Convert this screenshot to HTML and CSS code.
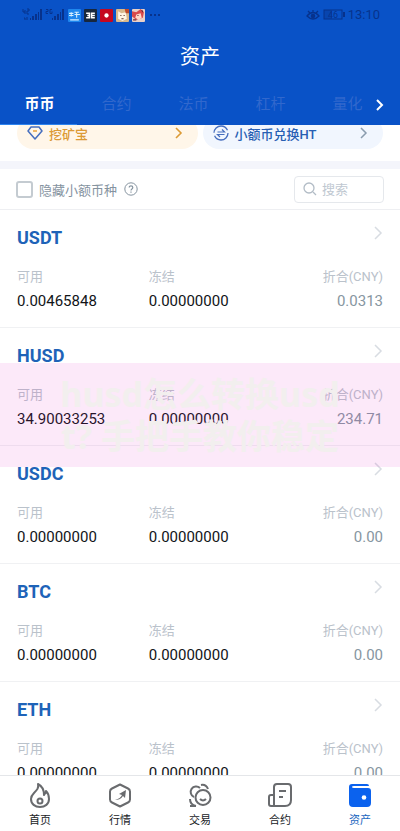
FILE: index.html
```html
<!DOCTYPE html>
<html lang="zh-CN">
<head>
<meta charset="utf-8">
<meta name="viewport" content="width=device-width, initial-scale=1">
<title>资产</title>
<link rel="stylesheet" href="styles.css">
</head>
<body>
<header class="top">
  <div class="status">
    <svg class="signal" width="20" height="14" viewBox="0 0 20 14"><path d="M1 1v3h2M3 2v4M5 1h2v2H5v3h2M2 10h1v2M5 9v3" stroke="currentColor" fill="none"/><path d="M8 10h1v2H8zM10 8h2v4h-2zM13 6h2v6h-2zM16 4h1v8h-1zM18 1h2v11h-2z" fill="currentColor"/></svg>
    <svg class="signal" width="20" height="14" viewBox="0 0 20 14"><path d="M1 1.500h2v2H1v2h2M7 1.500H5v4h2v-2" stroke="currentColor" fill="none"/><path d="M7 10h1v2H7zM9 8h2v4H9zM12 6h2v6h-2zM15 4h1v8h-1zM17 1h2v11h-2z" fill="currentColor"/></svg>
    <svg class="app" viewBox="0 0 12 12"><rect width="12" height="12" rx="1" fill="#1e87ee"/><path d="M1 4h4M3 3v4M1 6h4M6 3h4M8 3v5M6 5h5M2 10h8" stroke="#d5efff" fill="none"/></svg>
    <svg class="app" viewBox="0 0 12 12"><rect width="12" height="12" rx="1" fill="#17273d"/><path d="M2 4h3v4H2M3 6h2M10 4H7v4h3M7 6h3" stroke="#fff" stroke-width="1.400" fill="none"/></svg>
    <svg class="app" viewBox="0 0 12 12"><rect width="12" height="12" rx="1" fill="#c50720"/><circle cx="6" cy="6" r="2" fill="#fff"/></svg>
    <svg class="app" viewBox="0 0 12 12"><rect width="12" height="12" rx="1" fill="#d9b98c"/><path d="M2 2l3 2 4-1 1 6-4 2-4-2z" fill="#fff4e4"/><path d="M8 0h4v4H9z" fill="#c34a2b"/><path d="M4 6h1M7 6h1M5 9h2" stroke="#5d3a2c"/></svg>
    <svg class="app" viewBox="0 0 12 12"><rect width="12" height="12" rx="1" fill="#ead1c8"/><path d="M0 2l4 1 4-3 3 3-1 5-6 2-4-3z" fill="#d94a4c"/><path d="M4 5l4-1 1 4-3 2-3-2z" fill="#ffd9ca"/><path d="M9 1l1 2M5 6h1M1 10h3" stroke="#702831"/></svg>
    <svg class="more" width="12" height="4" viewBox="0 0 12 4"><path d="M2 1h2v2H2zM6 1h2v2H6zM10 1h2v2h-2z" fill="currentColor"/></svg>
    <svg class="eye" width="14" height="12" viewBox="0 0 14 12"><path d="M1 7q6-7 12 0-6 6-12 0zM2 2l2 2M7 1v2M12 2l-2 2" stroke="currentColor" stroke-width="1.300" fill="none"/><circle cx="7" cy="7" r="2.300" fill="currentColor"/></svg>
    <svg width="22" height="12" viewBox="0 0 22 12"><rect x="1" y="1" width="18" height="9" stroke="currentColor" fill="none"/><path d="M1 1h8v9H1z" fill="currentColor" opacity=".4"/><path d="M20 3h2v5h-2z" fill="currentColor"/><text x="5" y="9" class="charge">46</text></svg>
    <time>13:10</time>
  </div>
  <h1>资产</h1>
  <div class="tabbar">
    <nav class="tabs">
      <a href="#spot" class="tab on">币币</a><a href="#contract" class="tab">合约</a><a href="#fiat" class="tab">法币</a><a href="#margin" class="tab">杠杆</a><a href="#quant" class="tab">量化</a>
    </nav>
    <button class="next" aria-label="更多"><svg width="10" height="14" viewBox="0 0 10 14"><path d="M2 2l5 5-5 5" stroke="#fff" stroke-width="2" fill="none"/></svg></button>
  </div>
</header>

<main class="content">
  <div class="chips">
    <a href="#mining" class="chip gold"><svg width="16" height="16" viewBox="0 0 16 16"><path d="M4 2h8l3 4-7 8-7-8z" stroke="#466ebe" stroke-width="1.500" stroke-linejoin="round" fill="none"/><path d="M6 6h4" stroke="#e9a03a" stroke-width="1.500"/></svg><span>挖矿宝</span><svg class="go" width="10" height="14" viewBox="0 0 10 14"><path d="M2 2l5 5-5 5" stroke="currentColor" stroke-width="1.600" fill="none"/></svg></a>
    <a href="#swap" class="chip blue"><svg width="16" height="16" viewBox="0 0 16 16"><circle cx="8" cy="8" r="7" stroke="#466ebe" stroke-width="1.300" fill="none" stroke-dasharray="19 3"/><path d="M4.500 7h7L9 4.500M11.500 9.500h-7L7 12" stroke="#466ebe" stroke-width="1.200" fill="none"/></svg><span>小额币兑换HT</span><svg class="go grey" width="10" height="14" viewBox="0 0 10 14"><path d="M2 2l5 5-5 5" stroke="currentColor" stroke-width="1.500" fill="none"/></svg></a>
  </div>
  <div class="filter">
    <label class="hide"><input type="checkbox">隐藏小额币种</label>
    <button class="help" aria-label="说明"><svg width="14" height="14" viewBox="0 0 14 14"><circle cx="7" cy="7" r="6.200" stroke="currentColor" fill="none"/><path d="M5.200 5.600c0-2.300 3.600-2.300 3.600 0C8.800 7 7 6.900 7 8.400M7 9.500v1.200" stroke="currentColor" stroke-width="1.200" fill="none"/></svg></button>
    <label class="search"><svg width="14" height="14" viewBox="0 0 14 14"><circle cx="6" cy="6" r="5" stroke="currentColor" stroke-width="1.300" fill="none"/><path d="M10 10l3 3" stroke="currentColor" stroke-width="1.300"/></svg><input type="text" placeholder="搜索" aria-label="搜索"></label>
  </div>

  <section class="coin">
    <h2>USDT</h2><svg class="arrow" viewBox="0 0 10 14"><path d="M2 1l6 6-6 6"/></svg>
    <dl><div><dt>可用</dt><dd>0.00465848</dd></div><div><dt>冻结</dt><dd>0.00000000</dd></div><div class="worth"><dt>折合(CNY)</dt><dd>0.0313</dd></div></dl>
  </section>
  <section class="coin">
    <h2>HUSD</h2><svg class="arrow" viewBox="0 0 10 14"><path d="M2 1l6 6-6 6"/></svg>
    <dl><div><dt>可用</dt><dd>34.90033253</dd></div><div><dt>冻结</dt><dd>0.00000000</dd></div><div class="worth"><dt>折合(CNY)</dt><dd>234.71</dd></div></dl>
  </section>
  <section class="coin">
    <h2>USDC</h2><svg class="arrow" viewBox="0 0 10 14"><path d="M2 1l6 6-6 6"/></svg>
    <dl><div><dt>可用</dt><dd>0.00000000</dd></div><div><dt>冻结</dt><dd>0.00000000</dd></div><div class="worth"><dt>折合(CNY)</dt><dd>0.00</dd></div></dl>
  </section>
  <section class="coin">
    <h2>BTC</h2><svg class="arrow" viewBox="0 0 10 14"><path d="M2 1l6 6-6 6"/></svg>
    <dl><div><dt>可用</dt><dd>0.00000000</dd></div><div><dt>冻结</dt><dd>0.00000000</dd></div><div class="worth"><dt>折合(CNY)</dt><dd>0.00</dd></div></dl>
  </section>
  <section class="coin">
    <h2>ETH</h2><svg class="arrow" viewBox="0 0 10 14"><path d="M2 1l6 6-6 6"/></svg>
    <dl><div><dt>可用</dt><dd>0.00000000</dd></div><div><dt>冻结</dt><dd>0.00000000</dd></div><div class="worth"><dt>折合(CNY)</dt><dd>0.00</dd></div></dl>
  </section>
</main>

<nav class="bottom">
  <a href="#home"><svg viewBox="0 0 26 26"><path d="M11 2c1 4-1 6-4 9-2 2-3 4-3 6 0 5 4 8 9 8s9-3 9-8c0-3-1-6-3-8 0 2-1 3-2 4 0-5-2-9-6-11z"/><circle cx="13" cy="19" r="2.500"/></svg>首页</a>
  <a href="#market"><svg viewBox="0 0 26 26"><path d="M13 2.500l8 4q2 1 2 3v8q0 2-2 3l-8 4-8-4q-2-1-2-3v-8q0-2 2-3z"/><path class="solid" d="M8 18c4-1 6-3 7-5l-3-1 7-4-1 8-2-2c-2 3-5 4-8 4z"/></svg>行情</a>
  <a href="#trade"><svg viewBox="0 0 26 26"><circle cx="16" cy="15.500" r="7.500"/><path d="M13 17q3 3 6 0M7 15a5.500 5.500 0 1 1 6-9M14 3q5-1 7 4M3 17q0 6 6 7M3 24h6"/></svg>交易</a>
  <a href="#futures"><svg viewBox="0 0 26 26"><path d="M7 24V5q0-3 3-3h11q3 0 3 3v13q0 6-6 6H4q-2 0-2-2v-7q0-2 2-2h3M12 9h7M12 15h4"/></svg>合约</a>
  <a href="#assets" class="on"><svg viewBox="0 0 26 26"><path class="wallet" d="M5 2h15q2 0 2 2H7q-2 0-2 1t2 1h14q3 0 3 3v12q0 4-4 4H6q-4 0-4-4V5q0-3 3-3z"/><circle class="clasp" cx="17" cy="15.500" r="2.300"/></svg>资产</a>
</nav>

<div class="banner">husd怎么转换usd<br>t? 手把手教你稳定</div>
</body>
</html>
```
FILE: styles.css
```css
* { box-sizing: border-box; }
body {
  margin: 0;
  height: 100vh;
  display: flex;
  flex-direction: column;
  position: relative;
  overflow: hidden;
  background: #fff;
  font-family: Roboto, "Noto Sans CJK SC", sans-serif;
  font-size: 13px;
}
a { color: inherit; text-decoration: none; }
button { border: 0; padding: 0; background: none; display: flex; }
h1, h2, dl, dd { margin: 0; }

.top { background: #0952c7; color: #fff; flex: none; }
.status {
  height: 30px;
  padding: 0 20px 0 22px;
  display: flex;
  align-items: center;
  gap: 3px;
  color: #07328c;
}
.app { width: 13px; height: 13px; }
.eye { margin-left: auto; }
.charge { font-size: 9px; fill: currentColor; }
.status time { font-size: 13px; line-height: 16px; }
h1 {
  font-size: 20px;
  line-height: 54px;
  font-weight: 400;
  text-align: center;
}
.tabbar { display: flex; height: 41px; }
.tabs { display: flex; flex: 1; overflow: hidden; }
.tab {
  flex: 0 0 77px;
  padding-left: 2px;
  font-size: 15px;
  line-height: 40px;
  text-align: center;
  color: #3168cd;
}
.tab.on { color: #fff; font-weight: 700; border-bottom: 1px solid #2d83ef; }
.next { width: 36px; padding-right: 4px; align-items: center; justify-content: center; }

.content { flex: 1; min-height: 0; overflow: hidden; }
.chips {
  display: flex;
  gap: 5px;
  margin-top: -8px;
  padding: 0 17px 12px;
}
.chip {
  flex: 1;
  height: 32px;
  display: flex;
  align-items: center;
  gap: 6px;
  padding: 0 14px 0 10px;
  border-radius: 16px;
  font-weight: 500;
}
.gold { background: #fff6e9; color: #dc9a35; }
.blue { background: #f1f6fe; color: #285fb3; }
.go { margin-left: auto; }
.grey { color: #8a9cae; }
.filter {
  height: 49px;
  display: flex;
  align-items: center;
  padding: 0 16px;
  border-top: 8px solid #f4f5fb;
  border-bottom: 1px solid #eeeff2;
  color: #85939f;
}
.hide { display: flex; align-items: center; gap: 6px; }
.hide input {
  appearance: none;
  width: 17px;
  height: 17px;
  margin: 0;
  border: 2px solid #c4cbd1;
  border-radius: 3px;
}
.help { margin-left: 7px; color: #85939f; }
.search {
  width: 90px;
  height: 27px;
  margin-left: auto;
  padding: 0 8px;
  display: flex;
  align-items: center;
  gap: 5px;
  border: 1px solid #e5e8ec;
  border-radius: 4px;
  color: #b2bcc6;
}
.search svg { flex: none; }
.search input {
  min-width: 0;
  flex: 1;
  border: 0;
  padding: 0;
  outline: 0;
  background: none;
  font: inherit;
}
.search input::placeholder { color: #c0c8d1; }

.coin {
  height: 118px;
  padding: 16px 17px 0;
  display: grid;
  grid-template-columns: 1fr auto;
  grid-template-rows: 24px auto;
  row-gap: 16px;
  border-bottom: 1px solid #f0f1f3;
}
.coin h2 { font-size: 18px; line-height: 24px; font-weight: 700; color: #1e63b8; }
.arrow {
  width: 10px;
  height: 14px;
  fill: none;
  stroke: #d8dce2;
  stroke-width: 1.5;
}
.coin dl {
  grid-column: 1 / -1;
  display: grid;
  grid-template-columns: 36fr 35fr 29fr;
}
.coin dt { font-size: 13px; line-height: 22px; color: #bac2cb; }
.coin dd { font-size: 15px; line-height: 26px; font-weight: 400; color: #111418; }
.worth { text-align: right; }
.coin .worth dd { color: #8796a1; }

.bottom {
  flex: none;
  height: 56px;
  display: flex;
  border-top: 1px solid #e4e6e9;
  background: #fff;
}
.bottom a {
  flex: 1;
  display: flex;
  flex-direction: column;
  align-items: center;
  padding-top: 6px;
  gap: 5px;
  font-size: 11px;
  line-height: 16px;
  color: #202226;
}
.bottom svg {
  width: 26px;
  height: 26px;
  fill: none;
  stroke: #696b6e;
  stroke-width: 2;
  stroke-linejoin: round;
}
.bottom .on { color: #1c68c0; }
.bottom .solid { fill: #696b6e; stroke: none; }
.bottom .wallet { fill: #0b62ee; stroke: none; }
.bottom .clasp { fill: #fff; stroke: none; }

.banner {
  position: absolute;
  top: 363px;
  left: 0;
  right: 0;
  height: 104px;
  padding-top: 10px;
  background: rgba(225, 35, 195, 0.1);
  color: #f2efee;
  font: 700 34px/42px "Noto Sans", "Noto Sans CJK SC", sans-serif;
  text-align: center;
  pointer-events: none;
}
```
